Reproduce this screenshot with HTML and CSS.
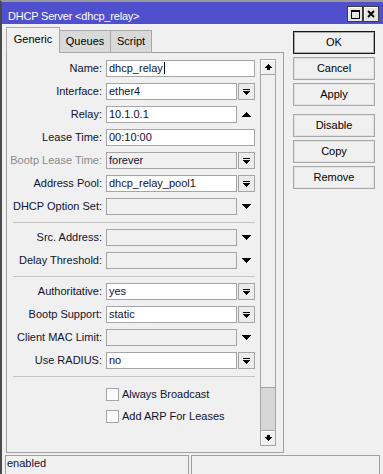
FILE: index.html
```html
<!DOCTYPE html>
<html>
<head>
<meta charset="utf-8">
<title>DHCP Server</title>
<link rel="stylesheet" href="styles.css">
</head>
<body>
<div class="window">
  <div class="titlebar">
    <span class="title">DHCP Server &lt;dhcp_relay&gt;</span>
    <div class="wbtns">
      <span class="wbtn"><svg width="9" height="9" viewBox="0 0 9 9" shape-rendering="crispEdges"><path d="M0 0h9v2H0z M0 2h1v7H0z M8 2h1v7H8z M0 8h9v1H0z" fill="#000"/></svg></span>
      <span class="wbtn"><svg width="8" height="8" viewBox="0 0 8 8"><path d="M1 1L7 7M7 1L1 7" stroke="#000" stroke-width="1.8"/></svg></span>
    </div>
  </div>
  <div class="body">
    <div class="leftcol">
      <div class="tabs">
        <div class="tab active t1">Generic</div>
        <div class="tab t2">Queues</div>
        <div class="tab t3">Script</div>
        <div class="tabfill"></div>
      </div>
      <div class="panel">
        <div class="form">
          <div class="row"><span class="label">Name:</span><span class="field">dhcp_relay<span class="caret"></span></span></div>
          <div class="row"><span class="label">Interface:</span><span class="field short">ether4</span><span class="ddbtn"><svg width="7" height="6" viewBox="0 0 7 6" shape-rendering="crispEdges"><path d="M0 0h7v1H0z M0 2h7v1H0z M1 3h5v1H1z M2 4h3v1H2z M3 5h1v1H3z"/></svg></span></div>
          <div class="row"><span class="label">Relay:</span><span class="field short">10.1.0.1</span><span class="arrow"><svg width="9" height="5" viewBox="0 0 9 5" shape-rendering="crispEdges"><path d="M4 0h1v1H4z M3 1h3v1H3z M2 2h5v1H2z M1 3h7v1H1z M0 4h9v1H0z"/></svg></span></div>
          <div class="row"><span class="label">Lease Time:</span><span class="field">00:10:00</span></div>
          <div class="row"><span class="label dis">Bootp Lease Time:</span><span class="field short gray">forever</span><span class="ddbtn"><svg width="7" height="6" viewBox="0 0 7 6" shape-rendering="crispEdges"><path d="M0 0h7v1H0z M0 2h7v1H0z M1 3h5v1H1z M2 4h3v1H2z M3 5h1v1H3z"/></svg></span></div>
          <div class="row"><span class="label">Address Pool:</span><span class="field short">dhcp_relay_pool1</span><span class="ddbtn"><svg width="7" height="6" viewBox="0 0 7 6" shape-rendering="crispEdges"><path d="M0 0h7v1H0z M0 2h7v1H0z M1 3h5v1H1z M2 4h3v1H2z M3 5h1v1H3z"/></svg></span></div>
          <div class="row"><span class="label">DHCP Option Set:</span><span class="field short gray"></span><span class="arrow"><svg width="9" height="5" viewBox="0 0 9 5" shape-rendering="crispEdges"><path d="M0 0h9v1H0z M1 1h7v1H1z M2 2h5v1H2z M3 3h3v1H3z M4 4h1v1H4z"/></svg></span></div>
          <div class="sep"></div>
          <div class="row"><span class="label">Src. Address:</span><span class="field short gray"></span><span class="arrow"><svg width="9" height="5" viewBox="0 0 9 5" shape-rendering="crispEdges"><path d="M0 0h9v1H0z M1 1h7v1H1z M2 2h5v1H2z M3 3h3v1H3z M4 4h1v1H4z"/></svg></span></div>
          <div class="row"><span class="label">Delay Threshold:</span><span class="field short gray"></span><span class="arrow"><svg width="9" height="5" viewBox="0 0 9 5" shape-rendering="crispEdges"><path d="M0 0h9v1H0z M1 1h7v1H1z M2 2h5v1H2z M3 3h3v1H3z M4 4h1v1H4z"/></svg></span></div>
          <div class="sep"></div>
          <div class="row"><span class="label">Authoritative:</span><span class="field short">yes</span><span class="ddbtn"><svg width="7" height="6" viewBox="0 0 7 6" shape-rendering="crispEdges"><path d="M0 0h7v1H0z M0 2h7v1H0z M1 3h5v1H1z M2 4h3v1H2z M3 5h1v1H3z"/></svg></span></div>
          <div class="row"><span class="label">Bootp Support:</span><span class="field short">static</span><span class="ddbtn"><svg width="7" height="6" viewBox="0 0 7 6" shape-rendering="crispEdges"><path d="M0 0h7v1H0z M0 2h7v1H0z M1 3h5v1H1z M2 4h3v1H2z M3 5h1v1H3z"/></svg></span></div>
          <div class="row"><span class="label">Client MAC Limit:</span><span class="field short gray"></span><span class="arrow"><svg width="9" height="5" viewBox="0 0 9 5" shape-rendering="crispEdges"><path d="M0 0h9v1H0z M1 1h7v1H1z M2 2h5v1H2z M3 3h3v1H3z M4 4h1v1H4z"/></svg></span></div>
          <div class="row"><span class="label">Use RADIUS:</span><span class="field short">no</span><span class="ddbtn"><svg width="7" height="6" viewBox="0 0 7 6" shape-rendering="crispEdges"><path d="M0 0h7v1H0z M0 2h7v1H0z M1 3h5v1H1z M2 4h3v1H2z M3 5h1v1H3z"/></svg></span></div>
          <div class="sep"></div>
          <div class="checks">
            <div class="check"><span class="box"></span><span>Always Broadcast</span></div>
            <div class="check"><span class="box"></span><span>Add ARP For Leases</span></div>
          </div>
        </div>
        <div class="scrollbar">
          <div class="sbbtn"><svg width="7" height="6" viewBox="0 0 7 6" shape-rendering="crispEdges"><path d="M3 0h1v1H3z M2 1h3v1H2z M1 2h5v1H1z M0 3h7v1H0z M2 4h3v2H2z"/></svg></div>
          <div class="sbthumb"></div>
          <div class="sbtrack"></div>
          <div class="sbbtn"><svg width="7" height="6" viewBox="0 0 7 6" shape-rendering="crispEdges"><path d="M2 0h3v2H2z M0 2h7v1H0z M1 3h5v1H1z M2 4h3v1H2z M3 5h1v1H3z"/></svg></div>
        </div>
      </div>
    </div>
    <div class="btncol">
      <div class="btn default">OK</div>
      <div class="btn">Cancel</div>
      <div class="btn">Apply</div>
      <div class="btn spaced">Disable</div>
      <div class="btn">Copy</div>
      <div class="btn">Remove</div>
    </div>
  </div>
  <div class="status">
    <div class="cell a">enabled</div>
    <div class="cell b"></div>
  </div>
</div>
</body>
</html>
```

FILE: styles.css
```css
* { box-sizing: border-box; }
html, body { margin: 0; padding: 0; }
body {
  width: 383px;
  height: 474px;
  overflow: hidden;
  background: #f0f0f0;
  font-family: "Liberation Sans", Arial, sans-serif;
  font-size: 11px;
  line-height: 13px;
  color: #10102e;
}
.window {
  width: 383px;
  height: 474px;
  border-top: 2px solid #9c9c9c;
  border-left: 2px solid #4a4a4a;
  background: #f0f0f0;
  display: flex;
  flex-direction: column;
}
.titlebar {
  height: 22px;
  flex: 0 0 22px;
  background: #5050cf;
  display: flex;
  align-items: flex-start;
  padding: 0 4px 0 6px;
  color: #fff;
}
.title { margin-top: 8px; letter-spacing: -0.2px; }
.wbtns { margin-left: auto; margin-top: 4px; display: flex; }
.wbtn {
  width: 16px;
  height: 16px;
  background: #e4e4e4;
  border: 1px solid #3c3c3c;
  box-shadow: inset 1px 1px #ffffff;
  display: flex;
  align-items: center;
  justify-content: center;
}
.body { display: flex; padding-left: 4px; flex: 0 0 429px; }
.leftcol { width: 278px; display: flex; flex-direction: column; margin-top: 3px; }
.tabs { display: flex; align-items: flex-end; height: 26px; }
.tab {
  height: 23px;
  border: 1px solid #a8a8a8;
  border-left: none;
  background: #d9d9d9;
  text-align: center;
  padding-top: 4px;
  color: #000;
}
.tab.active {
  height: 26px;
  border-left: 1px solid #a8a8a8;
  border-bottom: none;
  background: #f0f0f0;
  padding-top: 5px;
}
.t1 { width: 54px; }
.t2 { width: 51px; }
.t3 { width: 41px; }
.tabfill { flex: 1; height: 1px; border-bottom: 1px solid #a0a0a0; }
.panel {
  height: 400px;
  border: 1px solid #a0a0a0;
  border-top: none;
  display: flex;
}
.form { width: 253px; padding-top: 4px; }
.row { display: flex; height: 23px; padding-top: 3px; }
.label {
  width: 95px;
  margin-right: 4px;
  text-align: right;
  line-height: 17px;
  white-space: nowrap;
}
.label.dis { color: #8a8a8a; }
.field {
  width: 149px;
  height: 17px;
  border: 1px solid #a5a5a5;
  background: #ffffff;
  padding: 0 2px;
  line-height: 15px;
  white-space: nowrap;
  overflow: hidden;
}
.field.short { width: 131px; }
.field.gray { background: #f0f0f0; }
.caret { display: inline-block; width: 1px; height: 12px; background: #000; vertical-align: -2px; margin-left: 1px; }
.ddbtn {
  width: 17px;
  height: 17px;
  margin-left: 1px;
  border: 1px solid #a5a5a5;
  background: #ebebeb;
  display: flex;
  align-items: center;
  justify-content: center;
}
.arrow {
  width: 17px;
  height: 17px;
  margin-left: 1px;
  display: flex;
  align-items: center;
  justify-content: center;
}
.sep { margin: 4px 5px 3px 6px; height: 0; border-top: 1px solid #c3c3c3; }
.checks { padding-top: 3px; }
.check { display: flex; align-items: center; height: 22px; padding-left: 99px; }
.box {
  width: 13px;
  height: 13px;
  border: 1px solid #a5a5a5;
  background: #fbfbfb;
  margin-right: 3px;
}
.scrollbar {
  width: 16px;
  margin: 6px 7px 6px 0;
  display: flex;
  flex-direction: column;
}
.sbbtn {
  height: 16px;
  flex: 0 0 16px;
  border: 1px solid #a5a5a5;
  background: #f0f0f0;
  box-shadow: inset 1px 1px #ffffff;
  display: flex;
  align-items: center;
  justify-content: center;
}
.sbthumb {
  flex: 0 0 313px;
  border-left: 1px solid #a5a5a5;
  border-right: 1px solid #a5a5a5;
  border-bottom: 1px solid #a5a5a5;
  background: #f0f0f0;
}
.sbtrack {
  flex: 1;
  border-left: 1px solid #a5a5a5;
  border-right: 1px solid #a5a5a5;
  background: #d7d7d7;
}
.btncol {
  width: 82px;
  margin-left: 9px;
  margin-top: 7px;
  display: flex;
  flex-direction: column;
  gap: 3px;
}
.btn {
  height: 23px;
  border: 1px solid #a8a8a8;
  background: #f0f0f0;
  box-shadow: inset 0 0 0 1px #e2e2e2;
  display: flex;
  align-items: center;
  justify-content: center;
  color: #000;
}
.btn.default { border-color: #1a1a1a; box-shadow: inset 0 0 0 1px #a8a8a8; }
.btn.spaced { margin-top: 5px; }
.status { display: flex; margin-top: 2px; padding-left: 3px; gap: 2px; height: 19px; }
.cell {
  border: 1px solid #a0a0a0;
  border-bottom: none;
  padding: 1px 1px;
}
.cell.a { width: 184px; }
.cell.b { width: 189px; }
```
